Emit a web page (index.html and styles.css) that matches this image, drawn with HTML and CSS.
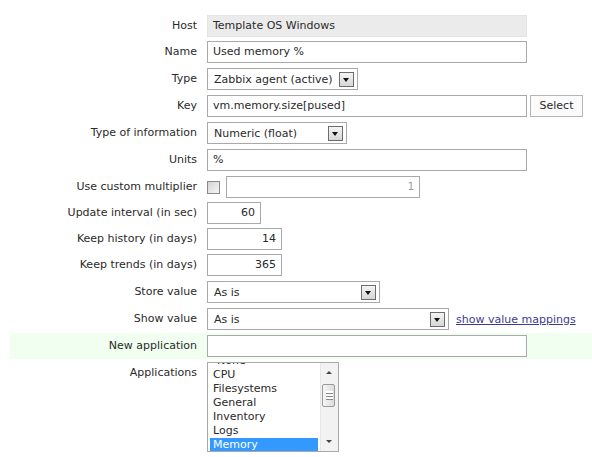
FILE: index.html
```
<!DOCTYPE html>
<html lang="en">

<head>
    <meta charset="UTF-8">
    <title>Item</title>
    <link rel="stylesheet" href="styles.css">
</head>

<body>

    <div class="item-form">
        <div class="row tight">
            <div class="label">Host</div>
            <div class="field"><div class="input wide disabled">Template OS Windows</div></div>
        </div>
        <div class="row">
            <div class="label">Name</div>
            <div class="field"><div class="input wide">Used memory %</div></div>
        </div>
        <div class="row">
            <div class="label">Type</div>
            <div class="field">
                <div class="select w-type"><span>Zabbix agent (active)</span><i class="arrow"></i></div>
            </div>
        </div>
        <div class="row">
            <div class="label">Key</div>
            <div class="field">
                <div class="input wide">vm.memory.size[pused]</div>
                <div class="button">Select</div>
            </div>
        </div>
        <div class="row">
            <div class="label">Type of information</div>
            <div class="field">
                <div class="select w-info"><span>Numeric (float)</span><i class="arrow"></i></div>
            </div>
        </div>
        <div class="row">
            <div class="label">Units</div>
            <div class="field"><div class="input wide">%</div></div>
        </div>
        <div class="row tight">
            <div class="label">Use custom multiplier</div>
            <div class="field">
                <span class="checkbox"></span>
                <div class="input num w-mult muted">1</div>
            </div>
        </div>
        <div class="row tight">
            <div class="label">Update interval (in sec)</div>
            <div class="field"><div class="input num w-short">60</div></div>
        </div>
        <div class="row tight">
            <div class="label">Keep history (in days)</div>
            <div class="field"><div class="input num w-days">14</div></div>
        </div>
        <div class="row">
            <div class="label">Keep trends (in days)</div>
            <div class="field"><div class="input num w-days">365</div></div>
        </div>
        <div class="row">
            <div class="label">Store value</div>
            <div class="field">
                <div class="select w-store"><span>As is</span><i class="arrow"></i></div>
            </div>
        </div>
        <div class="row">
            <div class="label">Show value</div>
            <div class="field">
                <div class="select w-show"><span>As is</span><i class="arrow"></i></div>
                <a class="link" href="#">show value mappings</a>
            </div>
        </div>
        <div class="row new-app">
            <div class="label">New application</div>
            <div class="field"><div class="input wide"></div></div>
        </div>
        <div class="row">
            <div class="label">Applications</div>
            <div class="field">
                <div class="listbox">
                    <ul class="options">
                        <li>-None-</li>
                        <li>CPU</li>
                        <li>Filesystems</li>
                        <li>General</li>
                        <li>Inventory</li>
                        <li>Logs</li>
                        <li class="selected">Memory</li>
                    </ul>
                    <div class="scrollbar">
                        <span class="sb-up"></span>
                        <span class="sb-thumb"></span>
                        <span class="sb-down"></span>
                    </div>
                </div>
            </div>
        </div>
    </div>

</body>

</html>
```
FILE: styles.css
```
body {
    margin: 0;
    padding: 0;
    background: #fff;
    font-family: "DejaVu Sans", Verdana, sans-serif;
    font-size: 11px;
    color: #2a2a2a;
}

/* form layout */
.item-form {
    margin: 13px 0 0 10px;
}

.row {
    display: flex;
    align-items: flex-start;
    padding: 2px 0;
    min-height: 22px;
    margin-bottom: 1px;
}

.row.tight { margin-bottom: 0; }

.label {
    width: 187px;
    text-align: right;
    padding-right: 10px;
    line-height: 22px;
    flex-shrink: 0;
}

.field {
    display: flex;
    align-items: center;
}

.new-app {
    background: #f0fff0;
}

/* inputs */
.input {
    box-sizing: border-box;
    height: 22px;
    line-height: 20px;
    border: 1px solid #a9a9a9;
    background: #fff;
    padding: 0 5px;
    white-space: nowrap;
}

.input.disabled {
    background: #ebebeb;
    border-color: #e4e4e4;
}

.wide { width: 320px; }
.w-mult { width: 194px; }
.w-short { width: 54px; }
.w-days { width: 75px; }

.num { text-align: right; }
.muted { color: #999; font-size: 10px; }

.button {
    box-sizing: border-box;
    height: 22px;
    line-height: 20px;
    margin-left: 3px;
    width: 53px;
    text-align: center;
    border: 1px solid #b5b5b5;
    background: #fbfbfb;
}

.checkbox {
    box-sizing: border-box;
    width: 13px;
    height: 13px;
    border: 1px solid #8a8a8a;
    background: linear-gradient(135deg, #d4d4d4, #f7f7f7);
    margin-right: 6px;
}

/* selects */
.select {
    box-sizing: border-box;
    height: 22px;
    border: 1px solid #a9a9a9;
    background: #fff;
    display: flex;
    align-items: center;
    justify-content: space-between;
    padding: 0 3px 0 6px;
}

.w-type { width: 151px; }
.w-info { width: 140px; }
.w-store { width: 173px; }
.w-show { width: 242px; }

.arrow {
    box-sizing: border-box;
    width: 15px;
    height: 15px;
    border: 1px solid #6d6d6d;
    background: linear-gradient(#f4f4f4, #d6d6d6);
    position: relative;
}

.arrow::after {
    content: "";
    position: absolute;
    left: 3px;
    top: 5px;
    border-left: 3.5px solid transparent;
    border-right: 3.5px solid transparent;
    border-top: 4px solid #111;
}

.link {
    margin-left: 7px;
    color: #3c3c8c;
    text-decoration: underline;
}

/* applications list */
.listbox {
    box-sizing: border-box;
    width: 132px;
    height: 90px;
    border: 1px solid #a9a9a9;
    display: flex;
    overflow: hidden;
}

.options {
    list-style: none;
    margin: -9px 0 0 2px;
    padding: 0;
    flex: 1;
}

.options li {
    height: 14px;
    line-height: 14px;
    padding-left: 3px;
}

.options li.selected {
    background: #3399ff;
    color: #fff;
}

.scrollbar {
    width: 17px;
    background: #f2f2f2;
    border-left: 1px solid #e6e6e6;
    margin-left: 2px;
    position: relative;
}

.sb-up, .sb-down {
    position: absolute;
    left: 5px;
    border-left: 3px solid transparent;
    border-right: 3px solid transparent;
}

.sb-up {
    top: 8px;
    border-bottom: 3px solid #444;
}

.sb-down {
    bottom: 8px;
    border-top: 3px solid #444;
}

.sb-thumb {
    position: absolute;
    left: 1px;
    top: 21px;
    width: 13px;
    height: 23px;
    box-sizing: border-box;
    border: 1px solid #9a9a9a;
    border-radius: 2px;
    background: repeating-linear-gradient(#fff 0 2px, #888 2px 3px) 3px 6px / 7px 9px no-repeat,
        linear-gradient(90deg, #f6f6f6, #dcdcdc);
}
```
